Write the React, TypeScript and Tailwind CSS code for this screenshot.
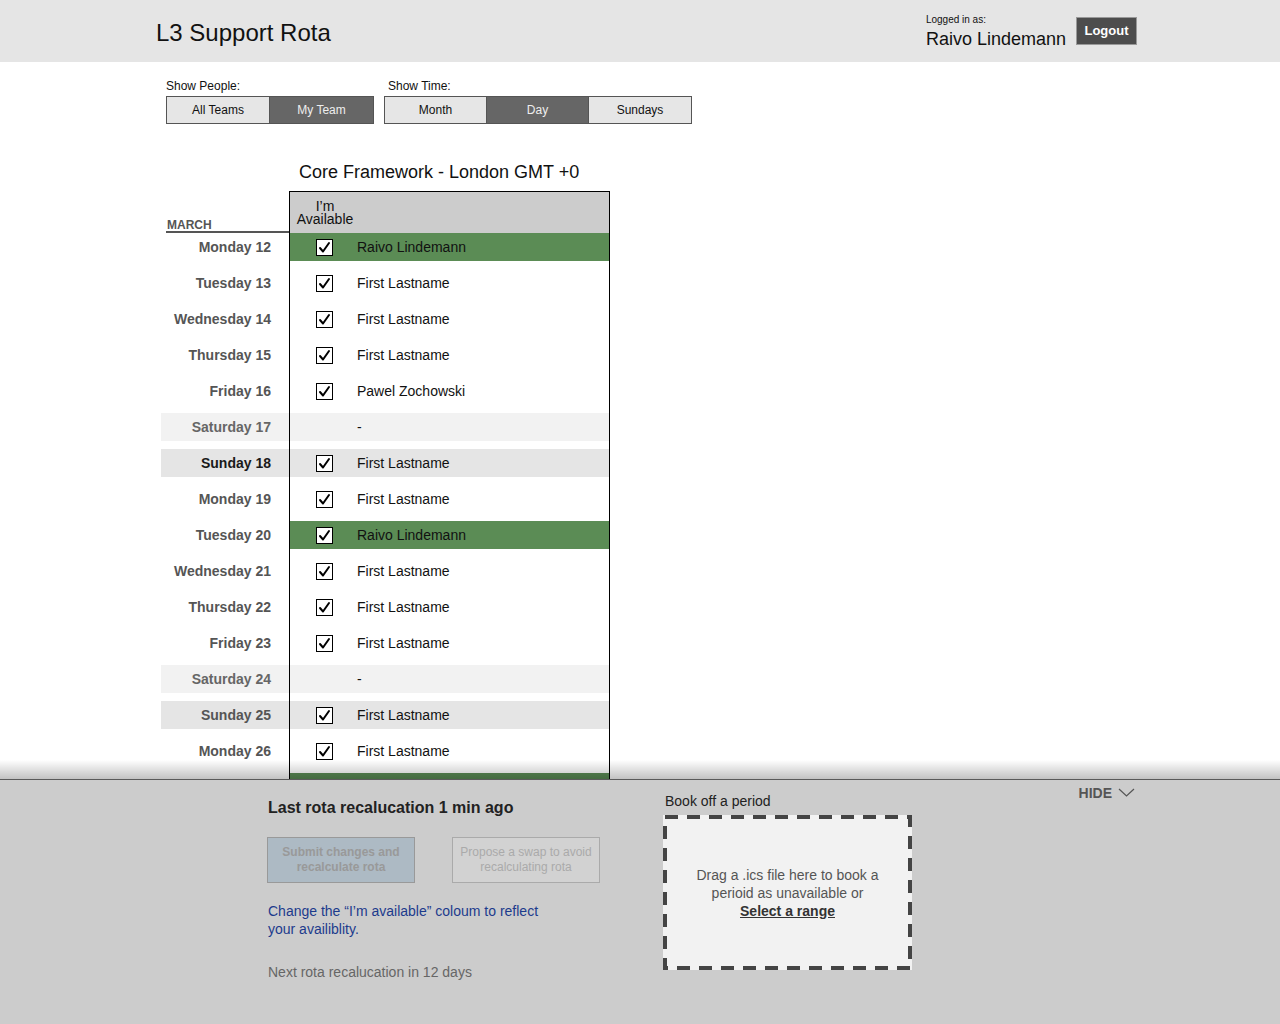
import { Fragment } from 'react'

type Kind = 'me' | 'sat' | 'sun' | 'day'

interface Day {
  label: string
  name?: string
  kind: Kind
  dark?: boolean
}

const days: Day[] = [
  { label: 'Monday 12', name: 'Raivo Lindemann', kind: 'me' },
  { label: 'Tuesday 13', name: 'First Lastname', kind: 'day' },
  { label: 'Wednesday 14', name: 'First Lastname', kind: 'day' },
  { label: 'Thursday 15', name: 'First Lastname', kind: 'day' },
  { label: 'Friday 16', name: 'Pawel Zochowski', kind: 'day' },
  { label: 'Saturday 17', kind: 'sat' },
  { label: 'Sunday 18', name: 'First Lastname', kind: 'sun', dark: true },
  { label: 'Monday 19', name: 'First Lastname', kind: 'day' },
  { label: 'Tuesday 20', name: 'Raivo Lindemann', kind: 'me' },
  { label: 'Wednesday 21', name: 'First Lastname', kind: 'day' },
  { label: 'Thursday 22', name: 'First Lastname', kind: 'day' },
  { label: 'Friday 23', name: 'First Lastname', kind: 'day' },
  { label: 'Saturday 24', kind: 'sat' },
  { label: 'Sunday 25', name: 'First Lastname', kind: 'sun' },
  { label: 'Monday 26', name: 'First Lastname', kind: 'day' },
  { label: 'Tuesday 27', name: 'Raivo Lindemann', kind: 'me' },
  { label: 'Wednesday 28', name: 'First Lastname', kind: 'day' },
]

function Checkbox() {
  return (
    <span className="flex h-[17px] w-[17px] items-center justify-center border border-black bg-white">
      <svg width="13" height="13" viewBox="0 0 13 13" fill="none">
        <path d="M2 7 L5 10.5 L11 2" stroke="#000" strokeWidth="2" strokeLinecap="round" strokeLinejoin="round" />
      </svg>
    </span>
  )
}

function Segmented({ items, active, width }: { items: string[]; active: string; width: string }) {
  return (
    <div className="flex h-[28px] border border-[#555] divide-x divide-[#555]">
      {items.map((it) => (
        <div
          key={it}
          className={
            it === active
              ? `flex ${width} items-center justify-center bg-[#666] text-[12px] text-[#eee]`
              : `flex ${width} items-center justify-center bg-[#e6e6e6] text-[12px] text-[#111]`
          }
        >
          {it}
        </div>
      ))}
    </div>
  )
}

function DayRow({ day }: { day: Day }) {
  const leftBg = day.kind === 'sat' ? 'bg-[#f2f2f2]' : day.kind === 'sun' ? 'bg-[#e5e5e5]' : 'bg-white'
  const rightBg =
    day.kind === 'me' ? 'bg-[#5b8c55]' : day.kind === 'sat' ? 'bg-[#f2f2f2]' : day.kind === 'sun' ? 'bg-[#e5e5e5]' : 'bg-white'
  const labelColor = day.kind === 'sat' ? 'text-[#666]' : day.dark ? 'text-[#1a1a1a]' : 'text-[#555]'
  return (
    <div className="flex h-[36px]">
      <div className="w-[128px]">
        <div className={`flex h-[28px] items-center justify-end pr-[18px] text-[14px] font-bold ${leftBg} ${labelColor}`}>
          {day.label}
        </div>
      </div>
      <div className="w-[321px] border-x border-black">
        <div className={`flex h-[28px] items-center ${rightBg}`}>
          <div className="flex w-[69px] justify-center">{day.name && <Checkbox />}</div>
          <span className="-ml-[2px] text-[14px] text-[#111]">{day.name ?? '-'}</span>
        </div>
      </div>
    </div>
  )
}

export default function App() {
  return (
    <div className="flex h-[1024px] flex-col overflow-hidden bg-white font-['Liberation_Sans',Arial,sans-serif] text-[#111]">
      <header className="flex h-[62px] shrink-0 items-center bg-[#e5e5e5] pl-[156px] pr-[143px]">
        <h1 className="mt-[3px] text-[24px] leading-none text-[#111]">L3 Support Rota</h1>
        <div className="ml-auto flex items-center gap-[10px]">
          <div className="mt-[2px] flex flex-col">
            <span className="text-[10px] leading-[12px]">Logged in as:</span>
            <span className="mt-[2px] text-[18px] leading-[22px]">Raivo Lindemann</span>
          </div>
          <button className="h-[28px] w-[61px] border border-[#999] bg-[#4d4d4d] text-[13px] font-bold text-white">
            Logout
          </button>
        </div>
      </header>

      <main className="min-h-0 flex-1 overflow-hidden pl-[161px]">
        <div className="mt-[17px] flex pl-[5px]">
          <div className="flex flex-col">
            <span className="mb-[3px] text-[12px] leading-[14px]">Show People:</span>
            <Segmented items={['All Teams', 'My Team']} active="My Team" width="w-[103px]" />
          </div>
          <div className="ml-[10px] flex flex-col">
            <span className="mb-[3px] pl-[4px] text-[12px] leading-[14px]">Show Time:</span>
            <Segmented items={['Month', 'Day', 'Sundays']} active="Day" width="w-[102px]" />
          </div>
        </div>

        <h2 className="mt-[37px] pl-[138px] text-[18px] leading-[22px] text-[#111]">Core Framework - London GMT +0</h2>

        <div className="mt-[8px] flex flex-col">
          <div className="flex h-[42px]">
            <div className="flex w-[128px] items-end pl-[5px]">
              <div className="w-full border-b-2 border-[#555] pl-[1px] text-[12px] font-bold leading-[12px] text-[#555]">
                MARCH
              </div>
            </div>
            <div className="flex w-[321px] items-center border-x border-t border-black bg-[#cccccc]">
              <div className="w-[70px] text-center text-[14px] leading-[13px] text-[#111]">
                I’m
                <br />
                Available
              </div>
            </div>
          </div>
          {days.map((d) => (
            <Fragment key={d.label}>
              <DayRow day={d} />
            </Fragment>
          ))}
        </div>
      </main>

      <footer className="relative flex h-[245px] shrink-0 border-t border-[#777] bg-[#cccccc] pl-[267px] pr-[145px]">
        <div className="pointer-events-none absolute bottom-full left-0 right-0 h-[20px] bg-linear-to-b from-black/0 to-black/25" />
        <div className="flex w-[396px] flex-col pt-[18px]">
          <div className="pl-[1px] text-[16px] font-bold leading-[20px] text-[#222]">Last rota recalucation 1 min ago</div>
          <div className="mt-[19px] flex gap-[37px]">
            <button className="h-[46px] w-[148px] border border-[#999] bg-[#adbac4] px-[4px] text-[12px] font-bold leading-[15px] text-[#999]">
              Submit changes and recalculate rota
            </button>
            <button className="h-[46px] w-[148px] border border-[#aaa] bg-[#d2d2d2] px-[2px] text-[12px] leading-[15px] text-[#aaa]">
              Propose a swap to avoid recalculating rota
            </button>
          </div>
          <p className="mt-[19px] w-[300px] pl-[1px] text-[14px] leading-[18px] text-[#1c3b8c]">
            Change the “I’m available” coloum to reflect your availiblity.
          </p>
          <p className="mt-[25px] pl-[1px] text-[14px] leading-[18px] text-[#666]">Next rota recalucation in 12 days</p>
        </div>
        <div className="flex flex-col pt-[12px]">
          <div className="pl-[2px] text-[14px] leading-[18px] text-[#222]">Book off a period</div>
          <div className="relative mt-[5px] flex h-[155px] w-[249px] items-center justify-center bg-[#f2f2f2]">
            <svg className="absolute inset-0" width="249" height="155" viewBox="0 0 249 155" fill="none">
              <rect x="2" y="2" width="245" height="151" stroke="#444" strokeWidth="4" strokeDasharray="13 9" />
            </svg>
            <p className="relative w-[200px] text-center text-[14px] leading-[18px] text-[#555]">
              Drag a .ics file here to book a perioid as unavailable or
              <span className="block font-bold text-[#333] underline">Select a range</span>
            </p>
          </div>
        </div>
        <div className="ml-auto flex items-start gap-[6px] pt-[4px]">
          <span className="text-[14px] font-bold leading-[18px] text-[#555]">HIDE</span>
          <svg width="17" height="18" viewBox="0 0 17 18" fill="none">
            <path d="M1 5 L8.5 12 L16 5" stroke="#555" strokeWidth="1.2" />
          </svg>
        </div>
      </footer>
    </div>
  )
}
